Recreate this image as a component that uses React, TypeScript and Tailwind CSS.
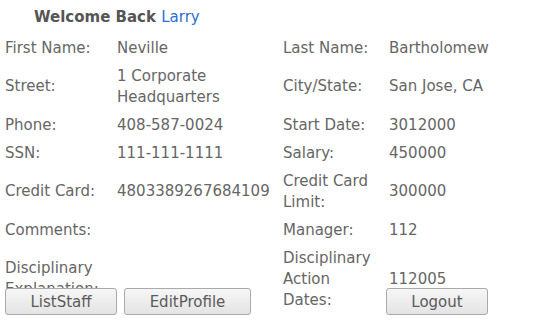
import React from "react";

const rows: { l1: string; v1: string; l2: string; v2: string }[] = [
    { l1: "First Name:", v1: "Neville", l2: "Last Name:", v2: "Bartholomew" },
    { l1: "Street:", v1: "1 Corporate Headquarters", l2: "City/State:", v2: "San Jose, CA" },
    { l1: "Phone:", v1: "408-587-0024", l2: "Start Date:", v2: "3012000" },
    { l1: "SSN:", v1: "111-111-1111", l2: "Salary:", v2: "450000" },
    { l1: "Credit Card:", v1: "4803389267684109", l2: "Credit Card Limit:", v2: "300000" },
    { l1: "Comments:", v1: "", l2: "Manager:", v2: "112" },
    { l1: "Disciplinary Explanation:", v1: "", l2: "Disciplinary Action Dates:", v2: "112005" },
];

const btn =
    "h-[27px] rounded-[3px] border border-[#a9a9a9] bg-gradient-to-b from-[#f6f6f6] to-[#e4e4e4] text-[15px] text-[#5a5a5a] leading-[20px]";

const App = () => {
    return (
        <div
            className="relative w-[557px] h-[324px] overflow-hidden bg-white text-[#666666] text-[15px] leading-[21px]"
            style={{ fontFamily: '"DejaVu Sans", Verdana, sans-serif' }}
        >
            <div className="h-[34px] pt-[7px] pl-[34px] font-bold text-[#555555]">
                Welcome Back <span className="font-normal text-[#2a6fd6]">Larry</span>
            </div>
            <div className="ml-[1px] grid grid-cols-[112px_166px_106px_1fr]">
                {rows.map((r, i) => (
                    <React.Fragment key={i}>
                        <div className="px-1 py-[3.5px] flex items-center">{r.l1}</div>
                        <div className="px-1 py-[3.5px] flex items-center">{r.v1}</div>
                        <div className="px-1 py-[3.5px] flex items-center">{r.l2}</div>
                        <div className="px-1 py-[3.5px] flex items-center">{r.v2}</div>
                    </React.Fragment>
                ))}
            </div>
            <div className="absolute left-[5px] top-[288px] flex">
                <button className={btn + " w-[112px]"}>ListStaff</button>
                <button className={btn + " w-[127px] ml-[7px]"}>EditProfile</button>
                <button className={btn + " w-[102px] ml-[135px]"}>Logout</button>
            </div>
        </div>
    );
};

export default App;
